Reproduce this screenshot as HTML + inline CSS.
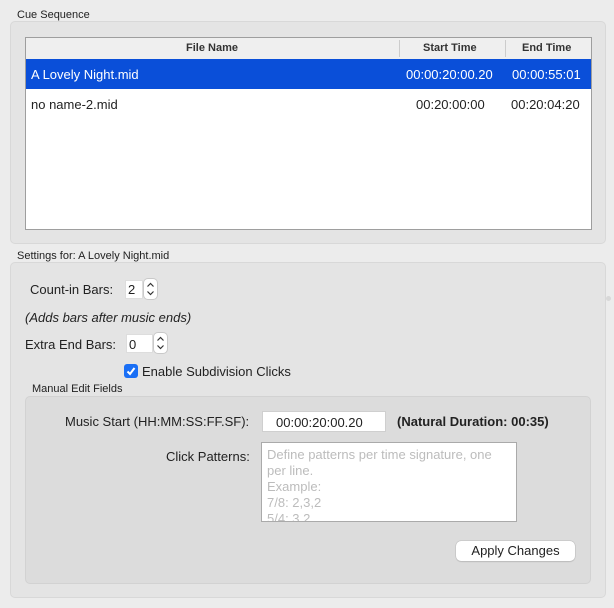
<!DOCTYPE html>
<html><head><style>
body{margin:0;width:614px;height:608px;background:#ececec;font-family:"Liberation Sans",sans-serif;font-size:13px;color:#222;position:relative;overflow:hidden}
.a{position:absolute}
.lbl{font-size:11px;color:#222}
.grp{position:absolute;background:#e4e4e4;border:1px solid #d8d8d8;border-radius:5px}
.cell{position:absolute;white-space:nowrap}
.field{position:absolute;background:#fff;border:1px solid #c8c8c8;box-sizing:border-box}
.step{position:absolute;width:13px;height:20px;background:#fff;border-radius:4px;box-shadow:0 0 0 1px #c9c9c9}
</style></head><body>
<div class="a lbl" style="left:17px;top:9px">Cue Sequence</div>
<div class="grp" style="left:10px;top:21px;width:594px;height:221px"></div>
<div class="a" style="left:25px;top:37px;width:565px;height:191px;background:#fff;border:1px solid #9e9e9e"></div>
<div class="a" style="left:26px;top:38px;width:565px;height:21px;background:#efefef;border-bottom:1px solid #d6d6d6;font-size:11px;font-weight:bold;color:#333">
 <div class="cell" style="left:160px;top:4px">File Name</div>
 <div class="a" style="left:373px;top:2px;width:1px;height:17px;background:#ccc"></div>
 <div class="cell" style="left:397px;top:4px">Start Time</div>
 <div class="a" style="left:479px;top:2px;width:1px;height:17px;background:#ccc"></div>
 <div class="cell" style="left:496px;top:4px">End Time</div>
</div>
<div class="a" style="left:26px;top:59px;width:565px;height:30px;background:#0a4fd9;color:#fff">
 <div class="cell" style="left:5px;top:8px">A Lovely Night.mid</div>
 <div class="cell" style="left:380px;top:8px">00:00:20:00.20</div>
 <div class="cell" style="left:486px;top:8px">00:00:55:01</div>
</div>
<div class="a" style="left:26px;top:89px;width:565px;height:30px">
 <div class="cell" style="left:5px;top:8px">no name-2.mid</div>
 <div class="cell" style="left:390px;top:8px">00:20:00:00</div>
 <div class="cell" style="left:485px;top:8px">00:20:04:20</div>
</div>
<div class="a lbl" style="left:17px;top:250px">Settings for: A Lovely Night.mid</div>
<div class="grp" style="left:10px;top:262px;width:594px;height:334px"></div>
<div class="a" style="left:606px;top:296px;width:5px;height:5px;border-radius:3px;background:#d8d8d8"></div>
<div class="cell" style="left:30px;top:282px">Count-in Bars:</div>
<div class="field" style="left:125px;top:280px;width:18px;height:19px;border-color:#ddd"><span style="position:absolute;left:2px;top:1px">2</span></div>
<div class="step" style="left:144px;top:279px"><svg width="13" height="20"><path d="M3.5 7.5L6.5 4.5L9.5 7.5M3.5 12.5L6.5 15.5L9.5 12.5" fill="none" stroke="#333" stroke-width="1.2"/></svg></div>
<div class="cell" style="left:25px;top:310px;font-style:italic">(Adds bars after music ends)</div>
<div class="cell" style="left:25px;top:337px">Extra End Bars:</div>
<div class="field" style="left:126px;top:334px;width:27px;height:19px;border-color:#ddd"><span style="position:absolute;left:2px;top:2px">0</span></div>
<div class="step" style="left:154px;top:333px"><svg width="13" height="20"><path d="M3.5 7.5L6.5 4.5L9.5 7.5M3.5 12.5L6.5 15.5L9.5 12.5" fill="none" stroke="#333" stroke-width="1.2"/></svg></div>
<div class="a" style="left:124px;top:364px;width:14px;height:14px;border-radius:3px;background:#1a6ff5"><svg width="14" height="14"><path d="M3.5 7.5L6 10L10.5 4" fill="none" stroke="#fff" stroke-width="2"/></svg></div>
<div class="cell" style="left:142px;top:364px">Enable Subdivision Clicks</div>
<div class="a lbl" style="left:32px;top:383px">Manual Edit Fields</div>
<div class="a" style="left:25px;top:396px;width:564px;height:186px;background:#dcdcdc;border:1px solid #d2d2d2;border-radius:5px"></div>
<div class="cell" style="left:65px;top:414px">Music Start (HH:MM:SS:FF.SF):</div>
<div class="field" style="left:262px;top:411px;width:124px;height:21px;border-color:#cfcfcf"><span style="position:absolute;left:13px;top:3px">00:00:20:00.20</span></div>
<div class="cell" style="left:397px;top:414px;font-weight:bold">(Natural Duration: 00:35)</div>
<div class="cell" style="left:166px;top:449px">Click Patterns:</div>
<div class="field" style="left:261px;top:442px;width:256px;height:80px;border-color:#aaa;overflow:hidden;color:#bcbcbc;padding:4px 5px;line-height:16px;font-size:13px">Define patterns per time signature, one per line.<br>Example:<br>7/8: 2,3,2<br>5/4: 3,2</div>
<div class="a" style="left:456px;top:541px;width:119px;height:20px;background:#fff;border-radius:5px;box-shadow:0 0 0 .5px #bbb,0 1px 1px rgba(0,0,0,.15);text-align:center;line-height:20px">Apply Changes</div>
</body></html>
